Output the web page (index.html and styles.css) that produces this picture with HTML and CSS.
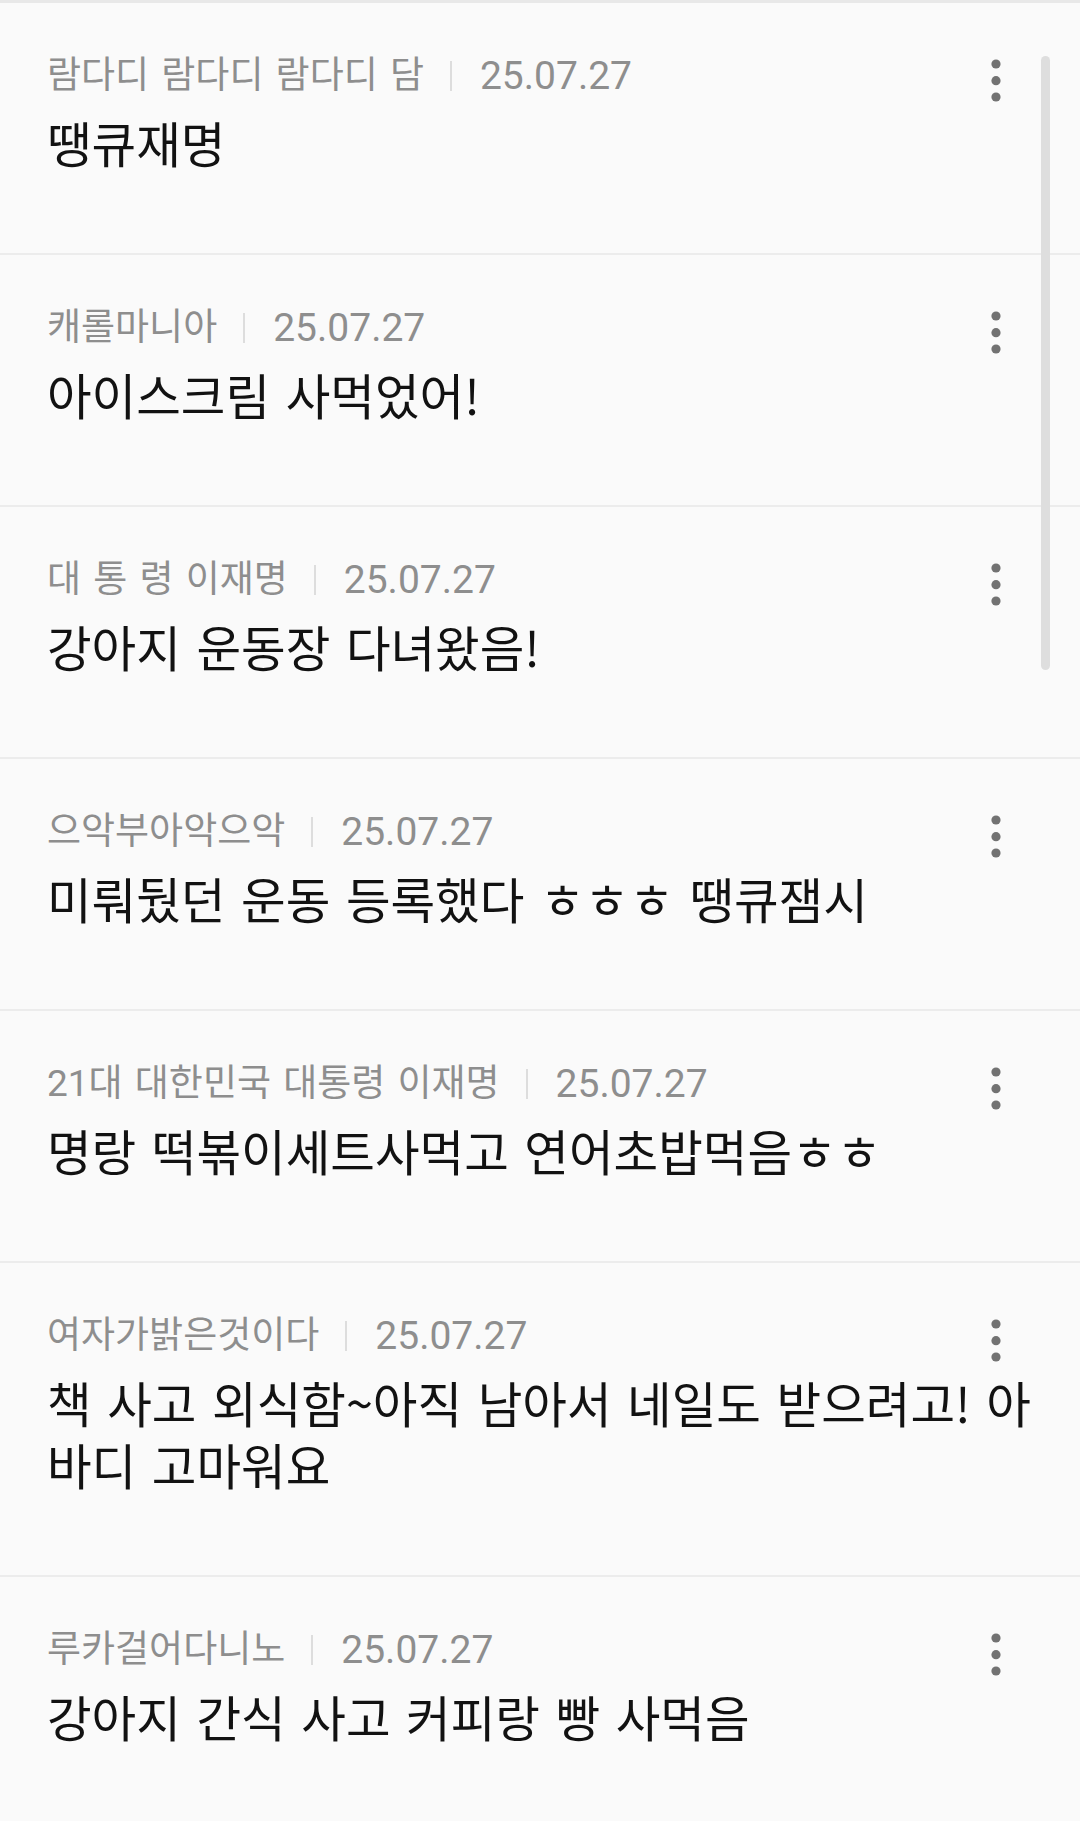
FILE: index.html
```html
<!DOCTYPE html>
<html lang="ko">
<head>
<meta charset="utf-8">
<title>댓글</title>
<link rel="stylesheet" href="styles.css">
</head>
<body>
<main class="list">
  <article class="item">
    <div class="meta">
      <span class="name">람다디 람다디 람다디 담</span>
      <span class="sep"></span>
      <span class="date">25.07.27</span>
      <span class="more"><svg viewBox="0 0 40 56" width="40" height="56"><circle cx="20" cy="15" r="4.6"/><circle cx="20" cy="31.7" r="4.6"/><circle cx="20" cy="48" r="4.6"/></svg></span>
    </div>
    <p class="text">땡큐재명</p>
  </article>
  <article class="item">
    <div class="meta">
      <span class="name">캐롤마니아</span>
      <span class="sep"></span>
      <span class="date">25.07.27</span>
      <span class="more"><svg viewBox="0 0 40 56" width="40" height="56"><circle cx="20" cy="15" r="4.6"/><circle cx="20" cy="31.7" r="4.6"/><circle cx="20" cy="48" r="4.6"/></svg></span>
    </div>
    <p class="text">아이스크림 사먹었어!</p>
  </article>
  <article class="item">
    <div class="meta">
      <span class="name">대 통 령 이재명</span>
      <span class="sep"></span>
      <span class="date">25.07.27</span>
      <span class="more"><svg viewBox="0 0 40 56" width="40" height="56"><circle cx="20" cy="15" r="4.6"/><circle cx="20" cy="31.7" r="4.6"/><circle cx="20" cy="48" r="4.6"/></svg></span>
    </div>
    <p class="text">강아지 운동장 다녀왔음!</p>
  </article>
  <article class="item">
    <div class="meta">
      <span class="name">으악부아악으악</span>
      <span class="sep"></span>
      <span class="date">25.07.27</span>
      <span class="more"><svg viewBox="0 0 40 56" width="40" height="56"><circle cx="20" cy="15" r="4.6"/><circle cx="20" cy="31.7" r="4.6"/><circle cx="20" cy="48" r="4.6"/></svg></span>
    </div>
    <p class="text">미뤄뒀던 운동 등록했다 ㅎㅎㅎ 땡큐잼시</p>
  </article>
  <article class="item">
    <div class="meta">
      <span class="name">21대 대한민국 대통령 이재명</span>
      <span class="sep"></span>
      <span class="date">25.07.27</span>
      <span class="more"><svg viewBox="0 0 40 56" width="40" height="56"><circle cx="20" cy="15" r="4.6"/><circle cx="20" cy="31.7" r="4.6"/><circle cx="20" cy="48" r="4.6"/></svg></span>
    </div>
    <p class="text">명랑 떡볶이세트사먹고 연어초밥먹음ㅎㅎ</p>
  </article>
  <article class="item">
    <div class="meta">
      <span class="name">여자가밝은것이다</span>
      <span class="sep"></span>
      <span class="date">25.07.27</span>
      <span class="more"><svg viewBox="0 0 40 56" width="40" height="56"><circle cx="20" cy="15" r="4.6"/><circle cx="20" cy="31.7" r="4.6"/><circle cx="20" cy="48" r="4.6"/></svg></span>
    </div>
    <p class="text">책 사고 외식함~아직 남아서 네일도 받으려고! 아바디 고마워요</p>
  </article>
  <article class="item">
    <div class="meta">
      <span class="name">루카걸어다니노</span>
      <span class="sep"></span>
      <span class="date">25.07.27</span>
      <span class="more"><svg viewBox="0 0 40 56" width="40" height="56"><circle cx="20" cy="15" r="4.6"/><circle cx="20" cy="31.7" r="4.6"/><circle cx="20" cy="48" r="4.6"/></svg></span>
    </div>
    <p class="text">강아지 간식 사고 커피랑 빵 사먹음</p>
  </article>
  <div class="scrollbar"></div>
</main>
</body>
</html>
```
FILE: styles.css
```css
html, body {
  margin: 0;
  padding: 0;
  height: 1821px;
  overflow: hidden;
  background: #fafafa;
}

body {
  font-family: "Noto Sans CJK KR", sans-serif;
  border-top: 3px solid #e8e8e8;
}

.list {
  position: relative;
}

.item {
  padding: 49px 0 80px 47px;
  border-bottom: 2px solid #ececec;
}

.meta {
  display: flex;
  align-items: center;
  height: 48px;
  padding-right: 64px;
  color: #8e8e8e;
}

.name {
  font-family: Roboto, "Noto Sans CJK KR", sans-serif;
  font-size: 37px;
  line-height: 48px;
  word-spacing: 3px;
  white-space: nowrap;
}

.sep {
  width: 2px;
  height: 30px;
  margin: 0 28px 0 26px;
  background: #dddddd;
}

.date {
  font-family: Roboto, sans-serif;
  font-size: 39px;
  line-height: 48px;
}

.more {
  margin-left: auto;
  align-self: flex-start;
  height: 48px;
  margin-top: -3px;
}

.more svg {
  display: block;
  fill: #727272;
}

.text {
  margin: 11px 0 0;
  padding-right: 40px;
  font-size: 48.5px;
  line-height: 62px;
  color: #121212;
  word-spacing: 2px;
}

.scrollbar {
  position: absolute;
  top: 53px;
  right: 30px;
  width: 9px;
  height: 614px;
  border-radius: 5px;
  background: #dedede;
}
```
